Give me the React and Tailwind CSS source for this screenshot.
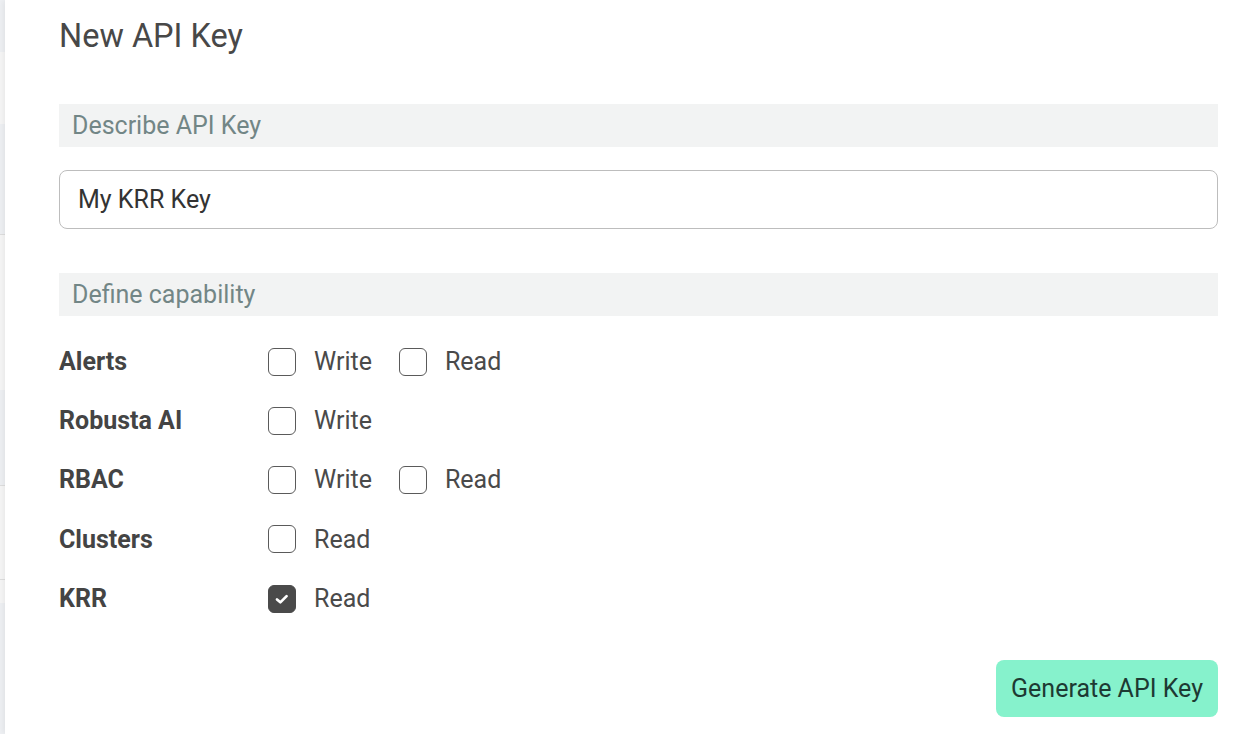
import React, { useState } from 'react';

const bands = [
    { h: 52, cls: 'bg-[#eef0f3]' },
    { h: 72, cls: 'bg-[#f6f6f6]' },
    { h: 110, cls: 'bg-[#eef0f3]' },
    { h: 156, cls: 'bg-[#f6f6f6] border-t border-[#dedede]' },
    { h: 95, cls: 'bg-[#eef0f3]' },
    { h: 94, cls: 'bg-[#f6f6f6] border-t border-[#dedede]' },
    { h: 24, cls: 'bg-[#f6f6f6] border-t border-[#dedede]' },
    { h: 131, cls: 'bg-[#eef0f3]' },
];

const capabilities = [
    { name: 'Alerts', options: ['Write', 'Read'] },
    { name: 'Robusta AI', options: ['Write'] },
    { name: 'RBAC', options: ['Write', 'Read'] },
    { name: 'Clusters', options: ['Read'] },
    { name: 'KRR', options: ['Read'] },
];

const Checkbox = ({ checked, onChange, label }) => (
    <label className="flex items-center cursor-pointer select-none">
        <span
            onClick={onChange}
            className={`w-[28px] h-[28px] rounded-[6px] flex items-center justify-center ${checked ? 'bg-[#4a4a4a] border-[1.5px] border-[#4a4a4a]' : 'border-[1.5px] border-[#5a5a5a] bg-white'}`}
        >
            {checked && (
                <svg width="20" height="20" viewBox="0 0 24 24" fill="none" stroke="white" strokeWidth="3.2" strokeLinecap="round" strokeLinejoin="round">
                    <polyline points="6 12.5 10 16 17.5 8.5" />
                </svg>
            )}
        </span>
        <span className="ml-[18px] text-[25px] text-[#4a4a4a]">{label}</span>
    </label>
);

const SectionHeader = ({ children }) => (
    <div className="h-[43px] bg-[#f2f3f3] flex items-center px-[13px] text-[25px] text-[#728686]">
        {children}
    </div>
);

export default function App() {
    const [name, setName] = useState('My KRR Key');
    const [checked, setChecked] = useState({ 'KRR-Read': true });

    const toggle = (key) => setChecked(prev => ({ ...prev, [key]: !prev[key] }));

    return (
        <div className="flex w-[1234px] h-[734px] overflow-hidden bg-white" style={{ fontFamily: 'Roboto, "Liberation Sans", sans-serif' }}>
            <div className="w-[5px] flex flex-col shrink-0">
                {bands.map((b, i) => (
                    <div key={i} className={`${b.cls}`} style={{ height: b.h }} />
                ))}
            </div>
            <div className="flex-1 bg-white shadow-[-2px_0_6px_rgba(0,0,0,0.06)] pl-[54px] pr-[16px] flex flex-col">
                <h1 className="text-[32.5px] text-[#484848] mt-[16px] leading-[40px]">New API Key</h1>

                <div className="mt-[48px]">
                    <SectionHeader>Describe API Key</SectionHeader>
                </div>

                <input
                    type="text"
                    value={name}
                    onChange={(e) => setName(e.target.value)}
                    className="mt-[23px] h-[59px] w-full border border-[#bdbdbd] rounded-[8px] px-[18px] text-[25px] text-[#333] outline-none"
                />

                <div className="mt-[44px]">
                    <SectionHeader>Define capability</SectionHeader>
                </div>

                <div className="mt-[16px] flex flex-col">
                    {capabilities.map(cap => (
                        <div key={cap.name} className="h-[59.25px] flex items-center">
                            <div className="w-[209px] text-[25px] font-bold text-[#444]">{cap.name}</div>
                            <div className="flex items-center gap-[27px]">
                                {cap.options.map(opt => {
                                    const key = `${cap.name}-${opt}`;
                                    return (
                                        <Checkbox
                                            key={key}
                                            label={opt}
                                            checked={!!checked[key]}
                                            onChange={() => toggle(key)}
                                        />
                                    );
                                })}
                            </div>
                        </div>
                    ))}
                </div>

                <div className="flex justify-end mt-[32px]">
                    <button className="h-[57px] px-[15px] bg-[#86f2cc] rounded-[8px] text-[25px] text-[#1d3a33]">
                        Generate API Key
                    </button>
                </div>
            </div>
        </div>
    );
}
